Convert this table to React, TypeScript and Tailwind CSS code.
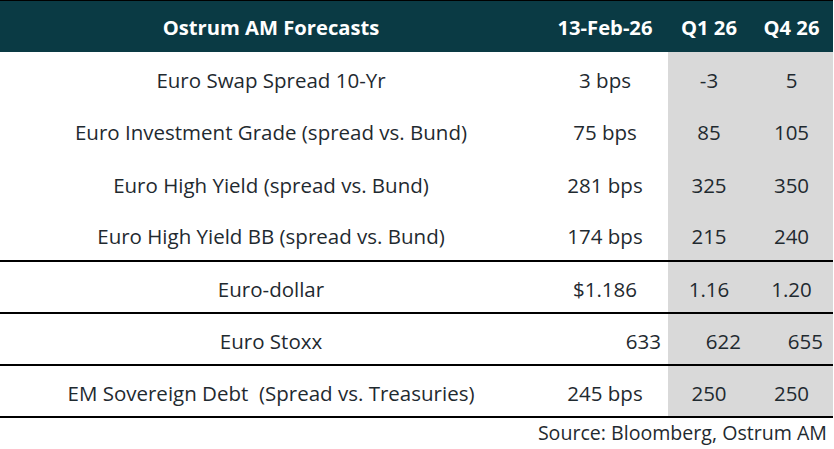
const rows = [
    { label: "Euro Swap Spread 10-Yr", now: "3 bps", q1: "-3", q4: "5", line: false },
    { label: "Euro Investment Grade (spread vs. Bund)", now: "75 bps", q1: "85", q4: "105", line: false },
    { label: "Euro High Yield (spread vs. Bund)", now: "281 bps", q1: "325", q4: "350", line: false },
    { label: "Euro High Yield BB (spread vs. Bund)", now: "174 bps", q1: "215", q4: "240", line: true },
    { label: "Euro-dollar", now: "$1.186", q1: "1.16", q4: "1.20", line: true },
    { label: "Euro Stoxx", now: "633", q1: "622", q4: "655", line: true, right: true },
    { label: "EM Sovereign Debt\u00a0 (Spread vs. Treasuries)", now: "245 bps", q1: "250", q4: "250", line: true },
];

const App = () => {
    return (
        <div className="w-[834px] h-[449px] bg-white text-[#1f2a30] font-['Open_Sans',sans-serif] text-[20.5px]">
            <div className="w-[833px] border-t border-black">
                <div className="grid grid-cols-[542px_126px_82px_83px] h-[51px] items-center bg-[#0a3a44] text-white font-bold text-[20.2px] pt-[2px]">
                    <div className="text-center">Ostrum AM Forecasts</div>
                    <div className="text-center">13-Feb-26</div>
                    <div className="text-center">Q1 26</div>
                    <div className="text-center">Q4 26</div>
                </div>

                {rows.map((row, i) => (
                    <div
                        key={i}
                        className={`grid grid-cols-[542px_126px_82px_83px] ${i < 4 ? "h-[52.5px]" : "h-[52px]"} ${row.line ? "border-b-2 border-black" : ""}`}
                    >
                        <div className="flex items-center justify-center pt-[4px]">{row.label}</div>
                        <div className={`flex items-center pt-[4px] ${row.right ? "justify-end pr-[7px]" : "justify-center"}`}>{row.now}</div>
                        <div className={`flex items-center pt-[4px] bg-[#d9d9d9] ${row.right ? "justify-end pr-[9px]" : "justify-center"}`}>{row.q1}</div>
                        <div className={`flex items-center pt-[4px] bg-[#d9d9d9] ${row.right ? "justify-end pr-[10px]" : "justify-center"}`}>{row.q4}</div>
                    </div>
                ))}

                <div className="flex justify-end pr-[6px] text-[19.6px]">Source: Bloomberg, Ostrum AM</div>
            </div>
        </div>
    );
};

export default App;
